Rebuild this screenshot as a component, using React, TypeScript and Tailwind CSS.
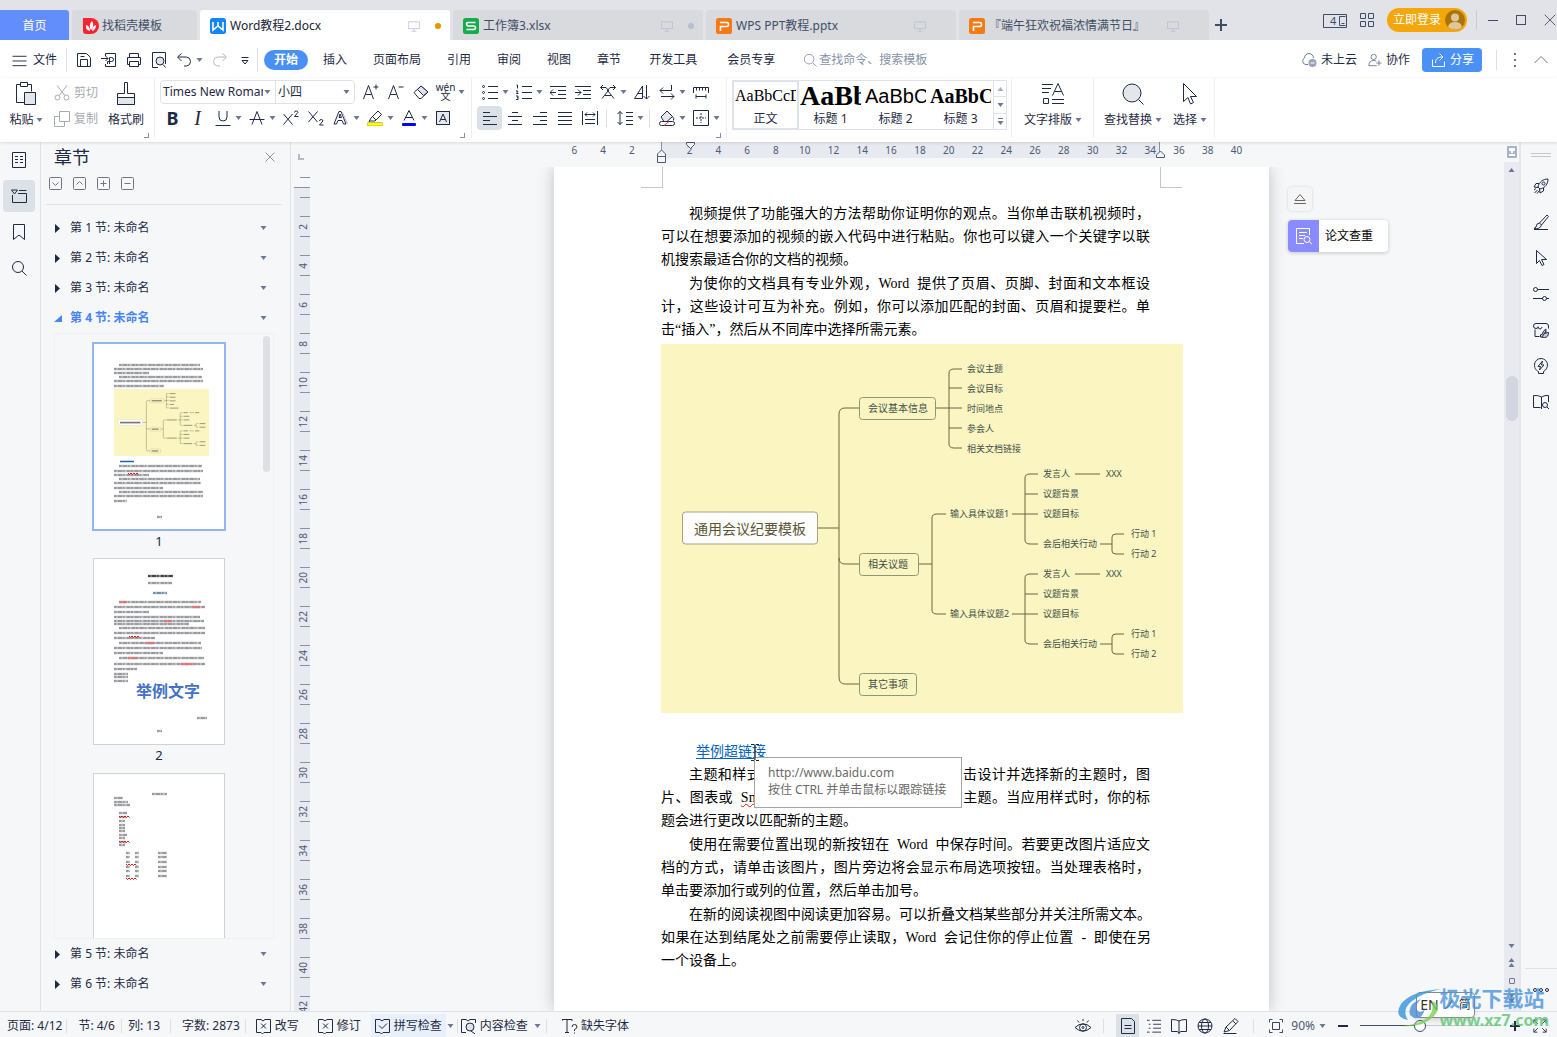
import { useState, type ReactNode } from "react";

const icons: Record<string, ReactNode> = {
  menu: <path d="M.5 3.5h15M.5 8.5h15M.5 13.5h15" />,
  save: <path d="M1.5 1.5h9l4 4v9h-13zM4.5 14.5v-7h7v7M4.5 4.5h4" />,
  exportPdf: <path d="M4.5 4V1.5h10v13h-10V12M0 6.500h7M4.500 4l2.500 2.500L4.500 9M8.500 12V5.500h2q2 0 2 2t-2 2H6.500v2.500" />,
  print: <path d="M3.500 5V1.500h9V5M3.500 12.500h-2v-7h13v7h-2M3.500 9.500h9v5h-9z" />,
  preview: <><path d="M7 15.500H1.500V.5h13V12M12 12.500l2.500 3" /><circle cx="9" cy="9" r="4" fill="#dfe2e8" /></>,
  undo: <path d="M5.500 1.500L1.500 5l4 4M2 5h8.500q4 .5 4 4.500t-4 4.500H8" />,
  redo: <path d="M10.500 1.500l4 3.500-4 4M14 5H5.500q-4 .5-4 4.500t4 4.500H8" />,
  drop: <path d="M4.500 5.500h7M5 8.500h6l-3 3.500z" />,
  search: <><circle cx="7" cy="7" r="5.500" /><path d="M11 11l4.500 4.500" /></>,
  cloud: <><path d="M7 12.500H4.500A3.500 3.500 0 0 1 3.500 6a4.500 4.500 0 0 1 9 0" /><circle cx="11.500" cy="11" r="4" fill="#9aa3bb" stroke="none" /><path d="M9.500 11h4" stroke="#fff" /></>,
  people: <><circle cx="6.500" cy="4.500" r="3" /><path d="M1 14.500c0-4 2-6 5.500-6 1 0 2 .2 3 1M1 14.500h9M12.500 8.500v6M9.500 11.500h6" /></>,
  share: <path d="M2.500 7.500v7h12v-5M5.500 11c0-4 2-6 7-6M9.500 1.500L13 5l-3.500 3.500" />,
  up: <path d="M1.500 11L8 4.500l6.500 6.500" />,
  cut: <><circle cx="3.500" cy="12.500" r="2.500" /><circle cx="12.500" cy="12.500" r="2.500" /><path d="M5 10.500L13 .5M11 10.500L3 .5" /></>,
  copy: <path d="M5.500.5h10v10h-10zM5.500 5.500h-5v10h10v-5" />,
  grow: <path d="M.5 15L5.500 1.500 10.500 15M2.500 10.500h6M13 .5v5M10.500 3h5" />,
  shrink: <path d="M.5 15L5.500 1.500 10.500 15M2.500 10.500h6M10.500 3h5" />,
  eraser: <><path d="M1 8.500L8 2l7 6-7 6.500H6z" /><path d="M4.500 5.500l6 6 4.500-3.500L8 2z" fill="#dfe2e8" /></>,
  underline: <path d="M4 1v6q0 4 4 4t4-4V1M.5 15.500h15" />,
  strike: <path d="M3 14.500L8 1.500l5 13M.5 9.500h15" />,
  sup: <path d="M.5 4L9.500 14.500M9.500 4L.5 14.500M11.500 2.500q0-1.500 1.700-1.500t1.700 1.500L11.500 6.500h4" />,
  sub: <path d="M.5 1.500L9.500 12M9.500 1.500L.5 12M11.500 11q0-1.500 1.700-1.500t1.700 1.500L11.500 15h4" />,
  outline: <><path d="M1 14L6 1.500h2L13 14h-2.500L9 10.500H5L3.500 14zM6 7.500h2.500L7 4z" /><path d="M9.500 2.500l5 11.500" stroke="#b5bac6" /></>,
  marker: <><path d="M4 8l7-7 3.500 3.500-6.500 6.500H3l-1 .5zM5.500 6.500L9 10" /><rect x="0" y="12.500" width="16" height="3.500" rx="1.500" fill="#ffff00" stroke="#8a8a3a" strokeWidth=".5" /></>,
  fontColor: <><path d="M3 10.500L8 .5l5 10M4.500 7.500h7" /><rect x="1" y="13" width="14" height="3" rx="1" fill="#0000ff" stroke="none" /></>,
  charBox: <><rect x="1.500" y="1.500" width="13" height="13" fill="#e6e8ec" /><path d="M4.500 12L8 4l3.500 8M6 9.500h4" /></>,
  bullets: <><circle cx="1.500" cy="2.500" r="1" /><circle cx="1.500" cy="8.500" r="1" /><circle cx="1.500" cy="14.500" r="1" /><path d="M6 2.500h10M6 8.500h10M6 14.500h10" /></>,
  numbers: <path d="M6 2.500h10M6 8.500h10M6 14.500h10M.5 1h1v3.500M0 7h2l-1.500 2.500H2.500M0 12h2v3.500H0M1 13.700h1" />,
  outdent: <path d="M0 2.500h16M8 6.500h8M8 10.500h8M0 14.500h16M0 8.500h6M3 5.500L0 8.500l3 3" />,
  indent: <path d="M0 2.500h16M8 6.500h8M8 10.500h8M0 14.500h16M0 8.500h6M3 5.500l3 3-3 3" />,
  spread: <path d="M2 14.500L8 7l6 7.500M5 11.500h6M3 1L.5 3.500 3 6M.5 3.500H6L9 7M13 1l2.500 2.500L13 6M15.500 3.500H10L7 7" />,
  sort: <path d="M.5 14.500L8.500 2v12.500zM3.500 9.500h5M12.500 1v14M9.500 12l3 3 3-3" />,
  wrap: <path d="M12.500 1v5.500H1M4 3.500l-3 3 3 3M2 12.500h13M12 9.500l3 3-3 3" />,
  rulerIcon: <path d="M.5 9V3.500h15V9M3.500 4v2.500M6.500 4v2.500M9.500 4v2.500M12.500 4v2.500M3 12.500h10M3 10.500v4M13 10.500v4" />,
  left: <path d="M1 2.500h7M1 6.500h14M1 10.500h7M1 14.500h14" />,
  center: <path d="M5 2.500h6M1 6.500h14M5 10.500h6M1 14.500h14" />,
  right: <path d="M8 2.500h7M1 6.500h14M8 10.500h7M1 14.500h14" />,
  justify: <path d="M1 2.500h14M1 6.500h14M1 10.500h14M1 14.500h14" />,
  distribute: <path d="M.5 1v14M15.500 1v14M3 4.500h10M5 2.500l-2 2 2 2M11 2.500l2 2-2 2M3 9.500h10M3 13.500h10" />,
  spacing: <path d="M3 1.500v13M.5 4L3 1.500 5.500 4M.5 12L3 14.500 5.500 12M9 2.500h7M9 6.500h7M9 10.500h7M9 14.500h7" />,
  fill: <><path d="M2 7l6-6 5.500 5.500L8 11.500H5zM13.500 6.500q2 2 1 4" fill="#e6e8ec" /><rect x="0.500" y="11.500" width="15" height="4" rx="2" /><path d="M5 15.500l5-4" stroke="#e03c3c" /></>,
  borders: <><path d="M.5.5h15v15H.5z" /><path d="M8 3v10M3 8h10" strokeDasharray="2 1" /></>,
  page: <path d="M1.500.5h13v15h-13zM4 4.500h3M9 4.500h3M4 7.500h3M9 7.500h3M4 10.500h3M9 10.500h3" />,
  chapter: <path d="M.5 2h6l-3 4zM8 2.500h7.500M7 5.500h8.500v9H1.500V7" />,
  bookmark: <path d="M2.500.5h11v15L8 11l-5.500 4.500z" />,
  rocket: <><path d="M5 9C6 4 10 1 15 1c0 5-3 9-8 10zM6 5.500H3L1 9l4 .5M10.500 10v3L7 15l-.5-4M1 12l2-1.500M1.500 15l3-3M4 15.500L6 13" /><circle cx="10.500" cy="5.500" r="1.500" /></>,
  brush: <path d="M14 1L6.500 9M15.500 2.500L8.500 11M14 1l1.500 1.500M6.500 9q-3 0-3.500 4l-2 1.500q6 1 7.500-3.500zM1 15.500h14" />,
  cursor: <path d="M3.500.5v13l3-3 2.500 5 2-1-2.500-5h5z" />,
  sliders: <><circle cx="2.500" cy="3.500" r="2" /><circle cx="11.500" cy="12.500" r="2" /><path d="M4.500 3.500H16M0 12.500h9.500M13.500 12.500H16" /></>,
  shop: <><path d="M2 7.500v7h4.500M3 1.500h10q2.500 0 2.500 2.500v2.500M3 1.500Q.5 1.500.5 4T3 6.500t2-2M5 5q.5 2 2 2t2-2" /><path d="M7.500 15q-1-3 2-3 0-3 3.500-5 0 3-.5 4.500 2-1.500 3-1 0 5-4 5z" fill="#c9cdd6" /><path d="M9 15l4-6" /></>,
  bulb: <><path d="M5.500 13.500v2h5v-2M5.500 13.500C2 12 1.500 9 1.500 7a6.500 6.500 0 0 1 13 0c0 2-1 5-4 6.500" /><path d="M9.500 3L5 8.500h2.500L6.500 12 11 7H8.500z" /></>,
  bookSearch: <><path d="M8.500 15V3Q5 1 .5 1.500v12h7M8.500 3Q12 1 15.500 1.500V8" /><circle cx="12" cy="11" r="2.500" /><path d="M14 13l2 2" /></>,
  wpsBox: <path d="M5 1.500H.5v13H5l1.500 1.500L8 14.500h6.500v-13H9L7 3zM5 5.500l5 5M10 5.500l-5 5" />,
  checkBox: <path d="M5 1.500H.5v13H5l1.500 1.500L8 14.500h6.500v-13H9L7 3zM4 7.500l3 3 5-5" />,
  contentCheck: <><path d="M5 14.500H.5v-13H5L7 3l2-1.500h5.500V5M10 13l4 3" /><circle cx="9" cy="9" r="4" fill="#dfe2e8" /></>,
  missing: <path d="M0 3V1.500h10V3M5 1.500v13M3 14.500h4M10 9q0-2.500 2.500-2.500T15 9q0 1.500-2.500 2.500v1.500M12.500 14.500v1" />,
  eye: <><path d="M0 9.500Q8 2 16 9.500 8 17 0 9.500zM8 1v2M2.500 2.500L4 4.500M13.500 2.500L12 4.500" /><circle cx="8" cy="9.500" r="3.500" /><circle cx="8" cy="9.500" r="1" /></>,
  doc: <path d="M1.500.5h10l3 3v12h-13zM4.500 7.500h7M4.500 10.500h7" />,
  list: <path d="M0 1.500h3M6 1.500h10M2 6h2M7 6h9M2 10.500h2M7 10.500h9M0 15h3M6 15h10" />,
  book: <path d="M8 3v12.500M8 3Q6 1.500 .5 1.500v12h6L8 15.500l1.500-2h6v-12Q10 1.500 8 3z" />,
  globe: <><circle cx="8" cy="8" r="7" /><ellipse cx="8" cy="8" rx="3.500" ry="7" /><path d="M1 8h14M2 4.500h12M2 11.500h12" /></>,
  pen: <path d="M1 14l2-5 9-8.500 3 3-8.500 9zM3 9l3.500 3.500M.5 15.500h13M10 3l3 3" />,
  fit: <path d="M.5 4V.5H4M12 .5h3.500V4M15.500 12v3.500H12M4 15.500H.5V12M4 4h8v8H4z" />,
  expand: <path d="M1 5V1h4M1 1l4.500 4.500M11 1h4v4M15 1l-4.500 4.500M15 11v4h-4M15 15l-4.500-4.500M5 15H1v-4M1 15l4.500-4.500" />,
  monitor: <path d="M.5 2.500h15v9H.5zM8 11.500V15M4.500 15h7" />,
  close: <path d="M2 2l12 12M14 2L2 14" />,
};

function Icon({ name, size = 16, className = "" }: { name: string; size?: number; className?: string }) {
  return (
    <svg width={size} height={size} viewBox="0 0 16 16" fill="none" stroke="currentColor" className={`shrink-0 ${className}`} aria-hidden="true">
      {icons[name]}
    </svg>
  );
}

function Caret({ className = "" }: { className?: string }) {
  return (
    <svg width="7" height="4" viewBox="0 0 7 4" className={`shrink-0 fill-[#6b7794] ${className}`} aria-hidden="true">
      <path d="M.5 0h6L3.500 4z" />
    </svg>
  );
}

function Tool({ label, icon, caret, active, children }: { label: string; icon?: string; caret?: boolean; active?: boolean; children?: ReactNode }) {
  return (
    <button aria-label={label} className="flex items-center">
      <span className={`flex h-6 w-[25px] items-center justify-center rounded-sm ${active ? "bg-[#dce1e7]" : ""}`}>
        {icon ? <Icon name={icon} /> : children}
      </span>
      {caret && <span className="flex w-[9px]"><Caret /></span>}
    </button>
  );
}

function Divider({ className = "" }: { className?: string }) {
  return <span className={`w-px shrink-0 bg-[#dcdfe5] ${className}`} />;
}

function Logo({ kind }: { kind: string }) {
  if (kind === "docer")
    return (
      <svg width="16" height="16" viewBox="0 0 16 16" aria-hidden="true">
        <path d="M0 0h8a8 8 0 0 1 0 16H3a3 3 0 0 1-3-3z" fill="#f8232f" />
        <path d="M7 13Q2 12 3 7q4 1 4 6zM8 12Q5 7 9 3q3 4-1 9zM9 13q0-5 4-6 0 5-4 6z" fill="#fff" />
      </svg>
    );
  const fills: Record<string, string> = { w: "#1585fb", s: "#17ac4b", p: "#f57a14" };
  const marks: Record<string, string> = {
    w: "M3 4v8l5-4 5 4V4M8 4v4",
    s: "M12.500 4.500H5Q3.500 4.500 3.500 6T5 8h6q1.500 0 1.500 1.700T11 11.500H3.500",
    p: "M4.500 13V9.500M4 4.500h7q1.500 0 1.500 2T11 8.500H4.500V13",
  };
  return (
    <svg width="16" height="16" viewBox="0 0 16 16" className="shrink-0" aria-hidden="true">
      <rect width="16" height="16" rx="2.500" fill={fills[kind]} />
      <path d={marks[kind]} fill="none" stroke="#fff" strokeWidth="1.600" />
    </svg>
  );
}

const docTabs = [
  { title: "Word教程2.docx", kind: "w", active: true, dot: "bg-[#e49600]" },
  { title: "工作簿3.xlsx", kind: "s", active: false, dot: "bg-[#b7bdd3]" },
  { title: "WPS PPT教程.pptx", kind: "p", active: false, dot: "" },
  { title: "『端午狂欢祝福浓情满节日』", kind: "p", active: false, dot: "" },
];

function TitleBar() {
  return (
    <header className="flex h-10 shrink-0 items-end justify-between bg-[#e1e3e8] text-[#414d68]">
      <div className="flex h-[30px] items-stretch gap-[3px]" role="tablist">
        <button role="tab" className="w-[69px] rounded-tr-[3px] bg-[#628efb] pt-0.5 text-white">首页</button>
        <button role="tab" className="flex w-[125px] items-center gap-[3px] rounded-t-[3px] bg-[#d8dadd] pt-0.5 pl-[11px]">
          <Logo kind="docer" />找稻壳模板
        </button>
        {docTabs.map((t) => (
          <button
            key={t.title}
            role="tab"
            aria-selected={t.active}
            className={`flex w-[250px] items-center gap-1 rounded-t-[3px] pt-0.5 pl-2.5 ${t.active ? "bg-white text-[#1a2238]" : "bg-[#d8dadd]"}`}
          >
            <Logo kind={t.kind} />
            <span className="truncate">{t.title}</span>
            <span className="ml-auto flex w-[42px] shrink-0 items-center gap-[15px]">
              <Icon name="monitor" size={12} className="text-[#b7bdd3]" />
              {t.dot && <i className={`size-1.5 rounded-full ${t.dot}`} />}
            </span>
          </button>
        ))}
        <button aria-label="新建" className="flex w-[18px] items-center justify-center">
          <svg width="12" height="12" viewBox="0 0 12 12" stroke="currentColor" strokeWidth="2"><path d="M6 0v12M0 6h12" /></svg>
        </button>
      </div>
      <div className="flex h-10 items-center">
        <button aria-label="窗口" className="mr-[13px]">
          <svg width="24" height="15" viewBox="0 0 24 15" fill="none" stroke="currentColor">
            <path d="M.5 1.500h23v13H.5zM22.500 3.500h-6v9h6M18.500 10.500h3" />
            <text x="7" y="12" fontSize="11" fill="currentColor" stroke="none">4</text>
          </svg>
        </button>
        <button aria-label="应用" className="mr-[13px]">
          <svg width="14" height="14" viewBox="0 0 14 14" fill="none" stroke="currentColor"><path d="M.5.500h5v5h-5zM8.500.500h5v5h-5zM.5 8.500h5v5h-5zM8.500 8.500h5v5h-5z" /></svg>
        </button>
        <button className="flex h-6 items-center gap-1 rounded-full bg-[#f3a70b] pr-0.5 pl-1.5 text-white">
          立即登录
          <svg width="20" height="20" viewBox="0 0 20 20" aria-hidden="true">
            <circle cx="10" cy="10" r="10" fill="#a97408" />
            <circle cx="10" cy="7.500" r="4" fill="#dfc79a" />
            <path d="M3 17q1-5 7-5t7 5a10 10 0 0 1-14 0z" fill="#dfc79a" />
          </svg>
        </button>
        <span className="mr-0.5 ml-[9px] h-5 w-px bg-[#c9ccd4]" />
        <button aria-label="最小化" className="flex w-7 justify-center"><span className="h-px w-2.5 bg-[#414d68]" /></button>
        <button aria-label="最大化" className="flex w-7 justify-center"><span className="size-[10px] border border-[#414d68]" /></button>
        <button aria-label="关闭" className="flex w-[22px] justify-end"><Icon name="close" size={14} /></button>
      </div>
    </header>
  );
}

const menus = ["插入", "页面布局", "引用", "审阅", "视图", "章节"];

function MenuBar() {
  return (
    <nav className="flex h-[38px] shrink-0 items-center bg-white pt-0.5">
      <button className="flex items-center gap-1.5 pl-3"><Icon name="menu" size={15} />文件</button>
      <Divider className="mr-[9px] ml-[9px] h-6" />
      <div className="flex items-center gap-[9px]">
        <button aria-label="保存"><Icon name="save" /></button>
        <button aria-label="输出为PDF"><Icon name="exportPdf" /></button>
        <button aria-label="打印"><Icon name="print" /></button>
        <button aria-label="打印预览"><Icon name="preview" /></button>
        <button aria-label="撤销" className="flex items-center gap-1"><Icon name="undo" /><Caret /></button>
        <button aria-label="恢复" className="text-[#b3b8c2]"><Icon name="redo" /></button>
        <button aria-label="自定义快速访问工具栏"><Icon name="drop" /></button>
      </div>
      <Divider className="mr-1.5 ml-1 h-6" />
      <button className="mr-0.5 h-5 rounded-full bg-[#4990f5] px-2.5 font-bold text-white">开始</button>
      {menus.map((m) => <button key={m} className="px-[13px]">{m}</button>)}
      <button className="px-[15px]">开发工具</button>
      <button className="px-[15px]">会员专享</button>
      <label className="ml-[13px] flex items-center gap-0.5 text-[#8791a9]">
        <Icon name="search" size={14} />
        <input aria-label="查找命令" placeholder="查找命令、搜索模板" className="w-32 bg-transparent outline-none placeholder:text-[#8791a9]" />
      </label>
      <div className="ml-auto flex items-center">
        <button className="mr-[11px] flex items-center gap-1"><Icon name="cloud" className="text-[#6b7794]" />未上云</button>
        <button className="mr-3 flex items-center gap-1"><Icon name="people" size={14} className="text-[#6b7794]" />协作</button>
        <button className="flex h-6 items-center gap-1 rounded bg-[#4a91f5] px-2 text-white"><Icon name="share" />分享</button>
        <Divider className="mx-[14px] h-5" />
        <button aria-label="更多" className="mr-[14px] flex w-2 flex-col items-center gap-1">
          <i className="size-0.5 bg-[#6b7794]" /><i className="size-0.5 bg-[#6b7794]" /><i className="size-0.5 bg-[#6b7794]" />
        </button>
        <button aria-label="收起功能区" className="mr-2"><Icon name="up" className="text-[#6b7794]" /></button>
      </div>
    </nav>
  );
}

function Corner({ className = "" }: { className?: string }) {
  return <span className={`mb-1 size-[5px] shrink-0 self-end border-r border-b border-[#8791a9] ${className}`} />;
}

function Select({ label, value, className }: { label: string; value: string; className: string }) {
  return (
    <label className={`relative flex h-6 items-center border border-[#dfe2e8] ${className}`}>
      <select aria-label={label} className="size-full appearance-none overflow-hidden bg-transparent pr-3 pl-0.5 outline-none">
        <option>{value}</option>
      </select>
      <Caret className="pointer-events-none absolute right-1" />
    </label>
  );
}

const styles = [
  { name: "正文", sample: "AaBbCcDd", font: "font-['Liberation_Serif'] text-base" },
  { name: "标题 1", sample: "AaBbC", font: "font-['Liberation_Serif'] text-[28px] font-bold" },
  { name: "标题 2", sample: "AaBbCc", font: "font-['Liberation_Sans'] text-xl" },
  { name: "标题 3", sample: "AaBbCc", font: "font-['Liberation_Serif'] text-xl font-bold" },
];

function Ribbon() {
  return (
    <div className="relative z-10 flex h-16 shrink-0 bg-white shadow-[0_1px_3px_rgba(0,0,0,0.12)]">
      <div className="flex items-start gap-2.5 pl-2">
        <button className="flex w-9 flex-col items-center gap-1.5 pt-1">
          <svg width="22" height="24" viewBox="0 0 22 24" fill="none" stroke="currentColor" aria-hidden="true">
            <path d="M5.500 2.500h-4v18h8M12.500 2.500h4v7M5.500.500h7v4h-7z" />
            <path d="M9.500 10.500h11v12h-11z" fill="#e3e6ea" />
          </svg>
          <span className="flex items-center gap-0.5 whitespace-nowrap">粘贴<Caret /></span>
        </button>
        <div className="flex flex-col gap-2 pt-1.5 text-[#a7abb3]">
          <button className="flex h-[18px] items-center gap-1"><Icon name="cut" />剪切</button>
          <button className="flex h-[18px] items-center gap-1"><Icon name="copy" />复制</button>
        </div>
        <button className="flex w-9 flex-col items-center gap-1.5 pt-1">
          <svg width="20" height="24" viewBox="0 0 20 24" fill="none" stroke="currentColor" aria-hidden="true">
            <path d="M8.500.500h3v11h7v11h-17v-11h7z" />
            <path d="M1.500 15.500h17v7h-17z" fill="#e3e6ea" />
          </svg>
          格式刷
        </button>
      </div>
      <Corner />
      <Divider className="mr-[5px] ml-[5px] h-[60px] bg-[#eceef1]" />

      <div className="flex flex-col gap-0.5 pt-0.5">
        <div className="flex items-center">
          <Select label="字体" value="Times New Roman" className="w-[116px] rounded-l-sm" />
          <Select label="字号" value="小四" className="-ml-px w-20 rounded-r-sm" />
          <span className="w-[3px]" />
          <Tool label="增大字号" icon="grow" />
          <Tool label="减小字号" icon="shrink" />
          <Tool label="清除格式" icon="eraser" />
          <Tool label="拼音指南" caret>
            <span className="flex flex-col items-center text-[10px] leading-[9px]"><span>wén</span><span>文</span></span>
          </Tool>
        </div>
        <div className="flex items-center">
          <Tool label="加粗"><b className="text-lg">B</b></Tool>
          <Tool label="倾斜"><i className="font-['Liberation_Serif'] text-xl">I</i></Tool>
          <Tool label="下划线" icon="underline" caret />
          <Tool label="删除线" icon="strike" caret />
          <Tool label="上标" icon="sup" />
          <Tool label="下标" icon="sub" />
          <Tool label="文字效果" icon="outline" caret />
          <Tool label="突出显示" icon="marker" caret />
          <Tool label="字体颜色" icon="fontColor" caret />
          <Tool label="字符底纹" icon="charBox" />
        </div>
      </div>
      <Corner className="-ml-[7px]" />
      <Divider className="mr-[5px] ml-1.5 h-[60px] bg-[#eceef1]" />

      <div className="flex flex-col gap-0.5 pt-0.5">
        <div className="flex items-center">
          <Tool label="项目符号" icon="bullets" caret />
          <Tool label="编号" icon="numbers" caret />
          <Tool label="减少缩进" icon="outdent" />
          <Tool label="增加缩进" icon="indent" />
          <Tool label="中文版式" icon="spread" caret />
          <Tool label="排序" icon="sort" />
          <Tool label="显示编辑标记" icon="wrap" caret />
          <Tool label="标尺" icon="rulerIcon" />
        </div>
        <div className="flex items-center">
          <Tool label="左对齐" icon="left" active />
          <Tool label="居中对齐" icon="center" />
          <Tool label="右对齐" icon="right" />
          <Tool label="两端对齐" icon="justify" />
          <Tool label="分散对齐" icon="distribute" />
          <Divider className="mr-[5px] ml-1 h-[18px]" />
          <Tool label="行距" icon="spacing" caret />
          <Divider className="mr-1 ml-[3px] h-[18px]" />
          <Tool label="底纹颜色" icon="fill" caret />
          <Tool label="边框" icon="borders" caret />
        </div>
      </div>
      <Corner className="-ml-1.5" />
      <Divider className="mr-[5px] ml-[5px] h-[60px] bg-[#eceef1]" />

      <div className="mt-0.5 flex h-[50px] border border-[#dfe2e8]">
        {styles.map((s, i) => (
          <button key={s.name} className={`flex w-[65px] flex-col items-center overflow-hidden ${i === 0 ? "outline-2 -outline-offset-1 outline-[#dfe2ea]" : ""}`}>
            <span className={`flex h-[30px] w-[61px] items-center overflow-hidden leading-[30px] text-black ${s.font}`}>{s.sample}</span>
            {s.name}
          </button>
        ))}
        <div className="flex w-[13px] flex-col border-l border-[#dfe2e8]">
          <button aria-label="上一行" className="flex flex-1 items-center justify-center border-b border-[#dfe2e8]"><Caret className="rotate-180 opacity-60" /></button>
          <button aria-label="下一行" className="flex flex-1 items-center justify-center border-b border-[#dfe2e8]"><Caret /></button>
          <button aria-label="更多样式" className="flex flex-1 flex-col items-center justify-center gap-0.5"><i className="h-px w-[5px] bg-[#6b7794]" /><Caret /></button>
        </div>
      </div>
      <Divider className="mr-3 ml-1 h-[60px] bg-[#eceef1]" />

      <button className="flex flex-col items-center gap-1.5 pt-1">
        <svg width="24" height="24" viewBox="0 0 24 24" fill="none" stroke="currentColor" aria-hidden="true">
          <path d="M1 2.500h11M1 6.500h9M1 10.500h7M11.500 13.500L17 1.500l5.500 12M13.500 9.500h7M2.500 16.500h5v5h-5zM11 17.500h12M11 21.500h12" />
        </svg>
        <span className="flex items-center gap-[3px]">文字排版<Caret /></span>
      </button>
      <Divider className="mr-2.5 ml-[11px] h-[60px] bg-[#eceef1]" />
      <button className="flex flex-col items-center gap-1.5 pt-1">
        <svg width="24" height="24" viewBox="0 0 24 24" fill="none" stroke="currentColor" aria-hidden="true">
          <circle cx="11" cy="11" r="9" fill="#e3e6ea" /><path d="M17.500 17.500l5 5" />
        </svg>
        <span className="flex items-center gap-[3px]">查找替换<Caret /></span>
      </button>
      <button className="ml-[11px] flex flex-col items-center gap-1.5 pt-1">
        <svg width="16" height="24" viewBox="0 0 16 24" fill="none" stroke="currentColor" aria-hidden="true">
          <path d="M1.500 1.500v18l4.500-4 2.500 6.500 3-1.500-3-6h6z" />
        </svg>
        <span className="flex items-center gap-[3px]">选择<Caret /></span>
      </button>
      <Divider className="ml-[7px] h-[60px] bg-[#eceef1]" />
    </div>
  );
}

const mapLines = [
  "M157 184h21M198 64h-14q-6 0-6 6v263q0 7 6 7h14M178 214q0 6 6 6h14",
  "M275 64h26M301 25h-8q-5 0-5 4v71q0 4 5 4h8M288 44h13M288 84h13",
  "M258 220h13M285 170h-9q-5 0-5 4v92q0 4 5 4h9",
  "M351 170h26M377 130h-8q-5 0-5 4v62q0 4 5 4h8M364 150h13M414 130h25M439 200h12M463 190h-8q-4 0-4 3v14q0 3 4 3h8",
  "M351 270h26M377 230h-8q-5 0-5 4v62q0 4 5 4h8M364 250h13M414 230h25M439 300h12M463 290h-8q-4 0-4 3v14q0 3 4 3h8",
];

const mapLabels: [number, number, string][] = [
  [306, 25, "会议主题"], [306, 45, "会议目标"], [306, 65, "时间地点"], [306, 85, "参会人"], [306, 105, "相关文档链接"],
  [289, 170, "输入具体议题1"], [289, 270, "输入具体议题2"],
  [382, 130, "发言人"], [445, 130, "XXX"], [382, 150, "议题背景"], [382, 170, "议题目标"], [382, 200, "会后相关行动"], [470, 190, "行动 1"], [470, 210, "行动 2"],
  [382, 230, "发言人"], [445, 230, "XXX"], [382, 250, "议题背景"], [382, 270, "议题目标"], [382, 300, "会后相关行动"], [470, 290, "行动 1"], [470, 310, "行动 2"],
];

const mapNodes: [number, number, number, string][] = [
  [198, 53, 76, "会议基本信息"], [198, 209, 59, "相关议题"], [198, 329, 57, "其它事项"],
];

// mini draws the labels as bars, for the page thumbnails
function MindMap({ mini = false }: { mini?: boolean }) {
  return (
    <svg viewBox="0 0 522 369" className="block w-full" role="img" aria-label="通用会议纪要模板">
      <rect width="522" height="369" fill="#fbf5c2" />
      <path d={mapLines.join("")} fill="none" stroke="#6b6440" strokeWidth={mini ? 2 : 1} />
      <rect x="21.500" y="168" width="135" height="32" rx="3" fill="#fdfdfb" stroke="#a9a282" />
      {mini ? <rect x="33" y="180" width="112" height="9" fill="#777" /> : <text x="33" y="190" fontSize="14" fill="#5b5436">通用会议纪要模板</text>}
      {mapNodes.map(([x, y, w, label]) => (
        <g key={label}>
          <rect x={x + 0.5} y={y + 0.5} width={w} height="22" rx="3" fill="none" stroke="#8b9878" />
          {mini ? <rect x={x + 9} y={y + 8} width={w - 20} height="7" fill="#8a8a70" /> : <text x={x + 9} y={y + 15} fontSize="10" fill="#3f5148">{label}</text>}
        </g>
      ))}
      {mapLabels.map(([x, y, label]) =>
        mini ? (
          <rect key={`${x}-${y}`} x={x} y={y - 3} width={label.length * 8} height="6" fill="#a3a283" />
        ) : (
          <text key={`${x}-${y}`} x={x} y={y + 3} fontSize="9" fill="#3f5148">{label}</text>
        ),
      )}
    </svg>
  );
}

function Thumb({ rows, children }: { rows: [number, number, number, string?][]; children?: ReactNode }) {
  return (
    <svg viewBox="0 0 130 185" className="absolute inset-0 size-full" aria-hidden="true">
      {rows.map(([x, y, w, color]) => (
        <g key={`${x}-${y}`} stroke={color ?? "#7d8086"}>
          <path d={`M${x} ${y}h${w}`} strokeWidth="2.500" opacity=".45" />
          <path d={`M${x} ${y}h${w}`} strokeWidth="1.500" strokeDasharray="2.500 1.300 4.200 .9 1.700 2.100 3.300 .7" opacity=".8" />
        </g>
      ))}
      {children}
    </svg>
  );
}

const page1Rows: [number, number, number][] = [
  [25, 21, 81], [20, 25, 89], [20, 29, 35], [25, 33, 83], [20, 37, 89], [20, 42, 50],
  [25, 122, 83], [20, 127, 89], [20, 131, 35], [25, 135, 81], [20, 139, 87], [20, 144, 49], [25, 148, 84], [20, 152, 89], [20, 157, 13], [63, 173, 5],
];
const page2Rows: [number, number, number, string?][] = [
  [54, 17, 25, "#111"], [54, 24, 24], [59, 34, 14, "#4c7398"],
  [25, 43, 82], [20, 48, 91], [20, 53, 35], [20, 58, 86], [20, 62, 90], [20, 65, 75], [25, 69, 86], [20, 74, 91], [20, 79, 41],
  [25, 84, 82], [20, 89, 88], [20, 94, 49], [25, 99, 85], [20, 105, 91], [20, 110, 23], [20, 115, 14], [20, 118, 14], [20, 122, 14],
  [25, 43.1, 7, "#f06a6a"], [98, 48.1, 8, "#f06a6a"], [70, 62.1, 7, "#f06a6a"], [52, 84.1, 8, "#f06a6a"], [34, 99.1, 9, "#f06a6a"], [87, 105.1, 13, "#f06a6a"],
  [103, 159, 10], [63, 172, 5],
];
const page3Rows: [number, number, number][] = [
  [58, 20, 15], [20, 24, 9], [20, 28, 14], [20, 31, 16],
  [25, 39, 8], [25, 43, 7], [25, 47, 6], [25, 51, 6], [25, 54, 6], [25, 57, 6], [25, 61, 8], [25, 64, 6], [25, 68, 7], [25, 71, 6],
  [32, 79, 4], [41, 79, 4], [64, 79, 9], [32, 83, 4], [41, 83, 4], [64, 83, 9], [32, 88, 4], [41, 88, 4], [64, 88, 9],
  [32, 93, 4], [41, 93, 4], [64, 93, 9], [32, 97, 4], [41, 97, 4], [64, 97, 9], [32, 102, 4], [41, 102, 4], [64, 102, 9],
];

function Squiggle({ x, y }: { x: number; y: number }) {
  return <path d={`M${x} ${y}l1.500 1.500 1.500-1.500 1.500 1.500 1.500-1.500 1.500 1.500 1.500-1.500 1.500 1.500`} fill="none" stroke="#e01b1b" />;
}

function SectionRow({ n, open, onClick }: { n: number; open: boolean; onClick: () => void }) {
  return (
    <button onClick={onClick} className={`flex h-[30px] w-full shrink-0 items-center pr-[23px] pl-[13px] ${open ? "font-bold text-[#4684f7]" : ""}`}>
      <svg width="8" height="9" viewBox="0 0 8 9" fill="currentColor" aria-hidden="true">
        <path d={open ? "M0 8L8 1v7z" : "M1 0l5 4.500L1 9z"} />
      </svg>
      <span className="ml-2">第 {n} 节: 未命名</span>
      <Caret className="ml-auto" />
    </button>
  );
}

function ChapterPanel() {
  const [open, setOpen] = useState(4);
  return (
    <aside className="flex w-[250px] shrink-0 flex-col border-r border-[#dfe2e8] pb-3">
      <div className="flex h-[30px] items-center justify-between pr-[14px] pl-[13px]">
        <h2 className="text-lg">章节</h2>
        <button aria-label="关闭面板"><Icon name="close" size={12} className="text-[#6b7794]" /></button>
      </div>
      <div className="mr-2 ml-[5px] flex h-[33px] items-start gap-[11px] border-b border-[#dfe2e8] pt-[5px] pl-[3px] text-[#6f7480]">
        {["M3.500 5.500l3 3 3-3", "M3.500 7.500l3-3 3 3", "M3.500 6.500h6M6.500 3.500v6", "M3.500 6.500h6"].map((d) => (
          <button key={d} aria-label="展开折叠">
            <svg width="13" height="13" viewBox="0 0 13 13" fill="none" stroke="currentColor"><rect x=".5" y=".5" width="12" height="12" rx="1" /><path d={d} /></svg>
          </button>
        ))}
      </div>
      <div className="h-2 shrink-0" />
      {[1, 2, 3, 4].map((n) => <SectionRow key={n} n={n} open={open === n} onClick={() => setOpen(n)} />)}
      <div className="relative mr-4 ml-[13px] flex min-h-0 flex-1 flex-col items-center overflow-hidden border border-[#f0f1f4] pt-2 pr-2.5">
        <div className="relative h-[189px] w-[134px] shrink-0 border-2 border-[#94b5f5] bg-white">
          <Thumb rows={page1Rows}>
            <path d="M26 117.500h14" stroke="#1764b5" strokeWidth="1.500" />
            <Squiggle x={34} y={129} />
          </Thumb>
          <div className="absolute top-[45px] left-[20px] w-[95px]"><MindMap mini /></div>
        </div>
        <span className="h-[27px] shrink-0 text-[13px] leading-5">1</span>
        <div className="relative h-[187px] w-[132px] shrink-0 border border-[#d0d2d6] bg-white">
          <Thumb rows={page2Rows}>
            <Squiggle x={35} y={77} />
            <text x="42" y="138" fontSize="16" fontWeight="bold" fill="#4472c4">举例文字</text>
          </Thumb>
        </div>
        <span className="h-7 shrink-0 text-[13px] leading-5">2</span>
        <div className="relative h-[187px] w-[132px] shrink-0 border border-[#d0d2d6] bg-white">
          <Thumb rows={page3Rows}>
            <Squiggle x={25} y={42} />
            <Squiggle x={25} y={67} />
            <Squiggle x={32} y={90} />
            <Squiggle x={32} y={104} />
          </Thumb>
        </div>
        <span className="absolute top-0.5 right-[3px] h-[136px] w-[7px] rounded-full bg-[#dfe0e3]" />
      </div>
      {[5, 6].map((n) => <SectionRow key={n} n={n} open={open === n} onClick={() => setOpen(n)} />)}
    </aside>
  );
}

function VerticalRuler() {
  return (
    <div className="flex w-5 shrink-0 flex-col items-end overflow-hidden pr-px text-[10px] text-[#4e5a75]">
      <div className="flex h-[46px] w-4 shrink-0 flex-col items-end border-b border-[#8791a9]">
        <span className="mt-3 mr-1.5 size-[6px] shrink-0 border-b-2 border-l-2 border-[#b5bac6]" />
        <span className="mt-[17px] h-px w-2.5 shrink-0 bg-[#8791a9]" />
      </div>
      <div className="flex w-4 flex-col items-end bg-[#e7eaf0] pt-[9px]">
        <span className="mb-[9px] h-px w-2.5 shrink-0 bg-[#8791a9]" />
        {Array.from({ length: 21 }, (_, i) => (
          <div key={i} className="flex h-[39px] w-4 shrink-0 items-center justify-end">
            <span className="flex h-[21px] w-2.5 items-center justify-center border-y border-[#8791a9]">
              <span className="mr-1 rotate-180 leading-3 [writing-mode:vertical-rl]">{i * 2 + 2}</span>
            </span>
          </div>
        ))}
      </div>
    </div>
  );
}

const rulerNumbers = ["6", "4", "2", "", ...Array.from({ length: 20 }, (_, i) => String(i * 2 + 2))];

function HorizontalRuler() {
  return (
    <div className="relative z-[1] -ml-2 bg-[#f5f7f9] pl-2">
      <div className="relative mx-auto h-[25px] w-[715px] text-[10px] text-[#4e5a75]">
        <div className="absolute top-0 right-[109px] left-[107px] h-4 border-x border-[#8791a9] bg-[#e7eaf0]" />
        <div className="relative grid h-4 grid-cols-[repeat(24,minmax(0,1fr))] pr-[18px] pl-1.5 text-center leading-4">
          {rulerNumbers.map((n, i) => <span key={i}>{n}</span>)}
        </div>
        <svg width="520" height="25" viewBox="0 0 520 25" className="absolute top-0 left-[102px]" fill="#f5f6f8" stroke="#4e5a75" aria-hidden="true">
          <path d="M1.500 14.500V12L5.500 8l4 4v2.500zM1.500 14.500h8v6h-8zM30.500.5h8v2l-4 4-4-4zM500.500 15.500V13l4-4 4 4v2.500z" />
        </svg>
      </div>
    </div>
  );
}

function Tooltip() {
  return (
    <>
      <div role="tooltip" className="absolute top-[17px] left-[58px] z-10 border border-[#a5a5a5] bg-white pt-1.5 pr-[15px] pb-[9px] pl-[13px] font-['Noto_Sans','Noto_Sans_CJK_SC',sans-serif] text-xs leading-[17px] whitespace-nowrap text-[#6a6a6a]">
        <p>http://www.baidu.com</p>
        <p>按住 CTRL 并单击鼠标以跟踪链接</p>
      </div>
      <svg width="8" height="17" viewBox="0 0 8 17" className="absolute top-1 left-[55px] z-20" fill="none" stroke="#222" aria-hidden="true">
        <path d="M0 .5h3M5 .5h3M4 1v15M0 16.500h3M5 16.500h3" />
      </svg>
    </>
  );
}

function DocumentPage() {
  return (
    <article className="relative mx-auto w-[715px] flex-1 bg-white shadow-[0_0_16px_rgba(0,0,0,0.22)]">
      <div className="mx-[87px] flex justify-between">
        <span className="h-[21px] w-[22px] border-r border-b border-[#c4c6ca]" />
        <span className="h-[21px] w-[22px] border-b border-l border-[#c4c6ca]" />
      </div>
      <div className="pt-[14px] pl-[107px] font-['Liberation_Serif','Noto_Sans_CJK_SC',serif] text-sm leading-[23px] text-black">
        <div className="flex w-[489px] flex-col gap-px text-justify [&>p]:indent-7">
          <p>视频提供了功能强大的方法帮助你证明你的观点。当你单击联机视频时，可以在想要添加的视频的嵌入代码中进行粘贴。你也可以键入一个关键字以联机搜索最适合你的文档的视频。</p>
          <p>为使你的文档具有专业外观，Word&nbsp; 提供了页眉、页脚、封面和文本框设计，这些设计可互为补充。例如，你可以添加匹配的封面、页眉和提要栏。单击“插入”，然后从不同库中选择所需元素。</p>
        </div>
        <figure className="mt-[3px] w-[522px] font-['Noto_Sans','Noto_Sans_CJK_SC',sans-serif]"><MindMap /></figure>
        <div className="relative mt-[27px] ml-[35px] w-fit">
          <a href="http://www.baidu.com" className="text-[#0563c1] underline underline-offset-2">举例超链接</a>
          <Tooltip />
        </div>
        <div className="flex w-[489px] flex-col gap-px text-justify [&>p]:indent-7">
          <p>
            主题和样式也有助于文档保持协调。当你单击设计并选择新的主题时，图片、图表或&nbsp; <span className="underline decoration-[#e01b1b] decoration-wavy decoration-1">SmartArt</span>&nbsp;&nbsp; 图形将会更改以匹配新的主题。当应用样式时，你的标题会进行更改以匹配新的主题。
          </p>
          <p>使用在需要位置出现的新按钮在&nbsp; Word&nbsp; 中保存时间。若要更改图片适应文档的方式，请单击该图片，图片旁边将会显示布局选项按钮。当处理表格时，单击要添加行或列的位置，然后单击加号。</p>
          <p className="w-[490px]">在新的阅读视图中阅读更加容易。可以折叠文档某些部分并关注所需文本。如果在达到结尾处之前需要停止读取，Word&nbsp; 会记住你的停止位置&nbsp; -&nbsp; 即使在另一个设备上。</p>
        </div>
      </div>
      <div className="absolute top-[20px] left-full ml-[19px] flex flex-col items-start gap-[9px]">
        <button aria-label="收起" className="flex size-6 items-center justify-center rounded-sm bg-[#f5f5f5] text-[#666] shadow-[0_0_3px_rgba(0,0,0,0.15)]">
          <svg width="12" height="12" viewBox="0 0 12 12" fill="none" stroke="currentColor"><path d="M1 7.500L6 1.500l5 6zM0 10.500h12" /></svg>
        </button>
        <button className="flex h-8 items-center rounded-sm bg-white pr-[15px] whitespace-nowrap text-black shadow-[0_1px_4px_rgba(0,0,0,0.2)]">
          <span className="mr-1.5 flex h-8 w-[31px] items-center justify-center rounded-l-sm bg-[#8a8bff] text-white">
            <svg width="16" height="17" viewBox="0 0 16 17" fill="none" stroke="currentColor" aria-hidden="true">
              <path d="M8 15.500H.5V.500h13V7M3 4.500h8M3 7.500h6M3 10.500h4M13.500 13.500l2.500 3" /><circle cx="11" cy="11.500" r="3" />
            </svg>
          </span>
          论文查重
        </button>
      </div>
    </article>
  );
}

function ScrollBar() {
  return (
    <div className="flex w-[15px] shrink-0 flex-col items-center">
      <svg width="10" height="12" viewBox="0 0 10 12" className="my-1 shrink-0" aria-hidden="true">
        <rect width="10" height="12" rx="1" fill="#aab2c8" /><path d="M2 2h6v3H6v2H4V5H2zM2 8h6v2H2z" fill="#fff" />
      </svg>
      <div className="flex min-h-0 w-full flex-1 flex-col items-center bg-[#e8eaf0] pt-[6px] pb-2">
        <Caret className="rotate-180" />
        <div className="mt-[204px] h-[45px] w-3 shrink-0 rounded-full bg-[#d3d6df]" />
        <div className="flex-1" />
        <Caret className="mb-[10px]" />
        <Caret className="mb-px rotate-180" /><Caret className="mb-[11px] rotate-180" />
        <span className="mb-2.5 size-[6px] shrink-0 rounded-[1px] border border-[#6b7794]" />
        <Caret className="mb-px" /><Caret />
      </div>
    </div>
  );
}

const railTools: [string, string][] = [
  ["rocket", "快捷"], ["brush", "样式"], ["cursor", "选择窗格"], ["sliders", "属性"], ["shop", "素材"], ["bulb", "帮助"], ["bookSearch", "查找资料"],
];

function Status({ icon, label, caret }: { icon: string; label: string; caret?: boolean }) {
  return (
    <button className="flex items-center gap-[3px] whitespace-nowrap">
      <Icon name={icon} />{label}{caret && <Caret className="ml-[3px]" />}
    </button>
  );
}

function StatusBar() {
  const [zoom, setZoom] = useState(43);
  return (
    <footer className="flex h-[26px] shrink-0 items-center border-t border-[#dfe2e8] bg-[#f5f7f9] pt-0.5 pl-[7px]">
      <span>页面: 4/12</span><Divider className="mr-[11px] ml-1 h-3.5" />
      <span>节: 4/6</span><Divider className="mx-1.5 h-3.5" />
      <span>列: 13</span><Divider className="mr-[11px] ml-2.5 h-3.5" />
      <span>字数: 2873</span><Divider className="mr-2.5 ml-[5px] h-3.5" />
      <Status icon="wpsBox" label="改写" />
      <span className="w-[19px]" />
      <Status icon="wpsBox" label="修订" />
      <span className="ml-2.5 flex h-6 items-center bg-[#e8f0fb] px-1"><Status icon="checkBox" label="拼写检查" /></span>
      <Caret className="ml-px" /><Divider className="mx-[3px] h-3.5" />
      <Status icon="contentCheck" label="内容检查" caret />
      <Divider className="mr-[15px] ml-[5px] h-3.5" />
      <Status icon="missing" label="缺失字体" />
      <div className="ml-auto flex items-center">
        <button aria-label="护眼模式"><Icon name="eye" /></button>
        <Divider className="mx-3 h-3.5" />
        <button aria-label="页面视图" className="flex h-6 w-[23px] items-center justify-center bg-[#dce1e7]"><Icon name="doc" /></button>
        <span className="ml-2 flex items-center gap-[10px]">
          <button aria-label="大纲"><Icon name="list" size={14} /></button>
          <button aria-label="阅读版式"><Icon name="book" /></button>
          <button aria-label="Web版式"><Icon name="globe" /></button>
          <button aria-label="写作模式"><Icon name="pen" /></button>
        </span>
        <Divider className="mr-[15px] ml-[14px] h-3.5" />
        <button aria-label="最佳显示比例"><Icon name="fit" size={14} /></button>
        <button className="ml-2 flex items-center gap-1 text-[#4e5a75]">90%<Caret /></button>
        <button aria-label="缩小" className="ml-3 h-0.5 w-2.5 bg-current" />
        <input
          type="range"
          aria-label="显示比例"
          value={zoom}
          onChange={(e) => setZoom(Number(e.target.value))}
          className="mx-3 h-3 w-[138px] appearance-none bg-[linear-gradient(90deg,#414d68_43%,#c9ccd4_43%)] bg-[length:100%_1px] bg-center bg-no-repeat [&::-webkit-slider-thumb]:size-3 [&::-webkit-slider-thumb]:appearance-none [&::-webkit-slider-thumb]:rounded-full [&::-webkit-slider-thumb]:border [&::-webkit-slider-thumb]:border-[#414d68] [&::-webkit-slider-thumb]:bg-white"
        />
        <button aria-label="放大">
          <svg width="10" height="10" viewBox="0 0 10 10" stroke="currentColor" strokeWidth="2"><path d="M5 0v10M0 5h10" /></svg>
        </button>
        <button aria-label="全屏" className="mr-2.5 ml-[13px]"><Icon name="expand" size={14} /></button>
      </div>
    </footer>
  );
}

function SiteBadge() {
  return (
    <div className="pointer-events-none absolute right-[8px] bottom-[7px] z-30 flex items-end">
      <div className="absolute right-[74px] bottom-[12px] flex h-[26px] w-[59px] items-center justify-center gap-1 rounded border border-[#888] bg-white text-sm text-[#333] shadow-md">
        <span>EN</span><span className="text-xs">ノ</span><span className="text-xs">简</span>
      </div>
      <svg width="46" height="42" viewBox="0 0 46 42" className="relative" aria-hidden="true">
        <path d="M44 1Q14 3 4 16-4 29 11 32 4 22 15 13 25 5 44 1z" fill="#3d9bdc" opacity=".85" />
        <path d="M13 27Q10 16 24 11q-8 8-3 12 4 2 7-2-3 11-11 9" fill="#4b8fd6" opacity=".8" />
        <path d="M5 38Q30 40 40 24q3-8-5-11 3 14-10 20-8 4-20 5z" fill="#7bcf57" opacity=".8" />
      </svg>
      <div className="relative -ml-1 font-bold opacity-80">
        <p className="text-[21px] leading-[25px] text-[#4a94dc]">极光下载站</p>
        <p className="text-base leading-[19px] text-[#5cc774]">www.xz7.com</p>
      </div>
    </div>
  );
}

export default function App() {
  return (
    <div className="relative flex h-screen min-w-[1280px] flex-col overflow-hidden bg-[#f5f7f9] font-['Noto_Sans','Noto_Sans_CJK_SC',sans-serif] text-xs text-[#1f2a44]">
      <TitleBar />
      <MenuBar />
      <Ribbon />
      <main className="flex min-h-0 flex-1">
        <div className="flex w-[41px] shrink-0 flex-col items-center gap-1 border-r border-[#dfe2e8] pt-0.5 pr-0.5">
          {["page", "chapter", "bookmark", "search"].map((n) => (
            <button key={n} aria-label={n} className={`flex size-8 items-center justify-center rounded-sm ${n === "chapter" ? "bg-[#dce1e7]" : ""}`}>
              <Icon name={n} />
            </button>
          ))}
        </div>
        <ChapterPanel />
        <VerticalRuler />
        <div className="flex min-w-0 flex-1 flex-col overflow-hidden pl-2">
          <HorizontalRuler />
          <DocumentPage />
        </div>
        <ScrollBar />
        <div className="flex w-[38px] shrink-0 flex-col items-center border-l-2 border-[#e3e6eb] pt-[11px] pl-1">
          <span className="mb-[21px] h-1 w-5 border-y border-[#c4c6ca]" />
          <div className="flex flex-col gap-5">
            {railTools.map(([icon, label]) => <button key={icon} aria-label={label}><Icon name={icon} /></button>)}
          </div>
          <div className="mt-auto flex h-[43px] w-full items-center justify-center gap-0.5 border-t border-[#dfe2e8]">
            <i className="size-1 rounded-full border border-current" /><i className="size-1 rounded-full border border-current" /><i className="size-1 rounded-full border border-current" />
          </div>
        </div>
      </main>
      <StatusBar />
      <SiteBadge />
    </div>
  );
}
